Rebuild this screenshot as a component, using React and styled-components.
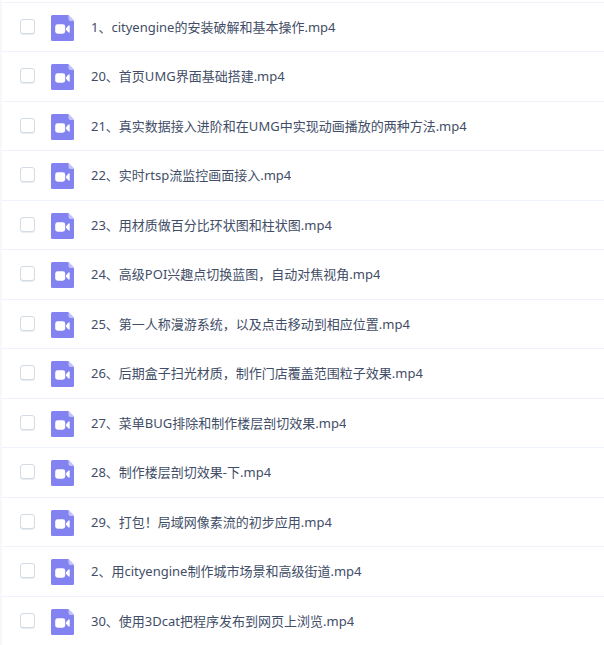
import React, {useState} from 'react'
import styled, { createGlobalStyle } from 'styled-components'

const files = [
    '1、cityengine的安装破解和基本操作.mp4',
    '20、首页UMG界面基础搭建.mp4',
    '21、真实数据接入进阶和在UMG中实现动画播放的两种方法.mp4',
    '22、实时rtsp流监控画面接入.mp4',
    '23、用材质做百分比环状图和柱状图.mp4',
    '24、高级POI兴趣点切换蓝图，自动对焦视角.mp4',
    '25、第一人称漫游系统，以及点击移动到相应位置.mp4',
    '26、后期盒子扫光材质，制作门店覆盖范围粒子效果.mp4',
    '27、菜单BUG排除和制作楼层剖切效果.mp4',
    '28、制作楼层剖切效果-下.mp4',
    '29、打包！局域网像素流的初步应用.mp4',
    '2、用cityengine制作城市场景和高级街道.mp4',
    '30、使用3Dcat把程序发布到网页上浏览.mp4',
]

function VideoIcon() {
    return (
        <FileIcon viewBox="0 0 23 26" aria-hidden="true">
            <path d="M1.500 0H17.500L23 5.500V24.500Q23 26 21.500 26H1.500Q0 26 0 24.500V1.500Q0 0 1.500 0Z" fill="#8283f0" />
            <path d="M17.500 0L23 5.500V6.500L17.500 1Z" fill="#d9d9fc" />
            <path d="M17.500 0.500L22.500 6H19.500Q17.500 6 17.500 4Z" fill="#c3c3f9" />
            <rect x="4.200" y="9.300" width="10" height="9.400" rx="2.400" fill="#fff" />
            <path d="M15 13.200L17.300 10.700Q18.700 9.600 18.700 11.200V16.800Q18.700 18.400 17.300 17.300L15 14.800Z" fill="#fff" />
        </FileIcon>
    )
}

function App() {
    const [selected, setSelected] = useState([]);

    const toggle = (name) => {
        setSelected(selected.includes(name) ? selected.filter((item) => item !== name) : [...selected, name]);
    }

    return (
        <Page>
            <GlobalStyle />
            <FileList>
                {files.map((name) => (
                    <FileRow key={name}>
                        <FileLabel>
                            <Checkbox type="checkbox" checked={selected.includes(name)} onChange={() => toggle(name)} />
                            <VideoIcon />
                            <FileName>{name}</FileName>
                        </FileLabel>
                    </FileRow>
                ))}
            </FileList>
        </Page>
    )
}

export default App

const GlobalStyle = createGlobalStyle`
    body{
        margin: 0;
        background: #fff;
    }
`

const Page = styled.main`
    border-left: 2px solid #f7f7fa;
    padding-top: 2px;
    overflow: hidden;
    font-family: 'Noto Sans', 'Noto Sans CJK SC', sans-serif;
`

const FileList = styled.ul`
    margin: 0;
    padding: 0;
    list-style: none;
    border-top: 1px solid #eff4fc;
`

const FileRow = styled.li`
    border-bottom: 1px solid #eff4fc;

    /* rows average out at 49.5px */
    &:nth-child(even){
        padding-bottom: 1px;
    }

    &:last-child{
        border-bottom: none;
    }
`

const FileLabel = styled.label`
    display: flex;
    align-items: center;
    min-height: 48px;
    padding: 0 18px;
    cursor: pointer;
`

const Checkbox = styled.input`
    appearance: none;
    flex: none;
    box-sizing: border-box;
    width: 15px;
    height: 15px;
    margin: 0 16px 1px 0;
    border: 1px solid #d3dbe5;
    border-radius: 3px;
    background: #fff;
    box-shadow: 0 1px 0 #e9edf2;
    cursor: pointer;

    &:checked{
        border-color: #8283f0;
        background: #8283f0;
    }
`

const FileIcon = styled.svg`
    flex: none;
    width: 23px;
    height: 26px;
    margin: 2px 17px 0 0;
`

const FileName = styled.span`
    min-width: 0;
    overflow: hidden;
    text-overflow: ellipsis;
    white-space: nowrap;
    font-size: 13px;
    line-height: 20px;
    color: #424e67;
`
